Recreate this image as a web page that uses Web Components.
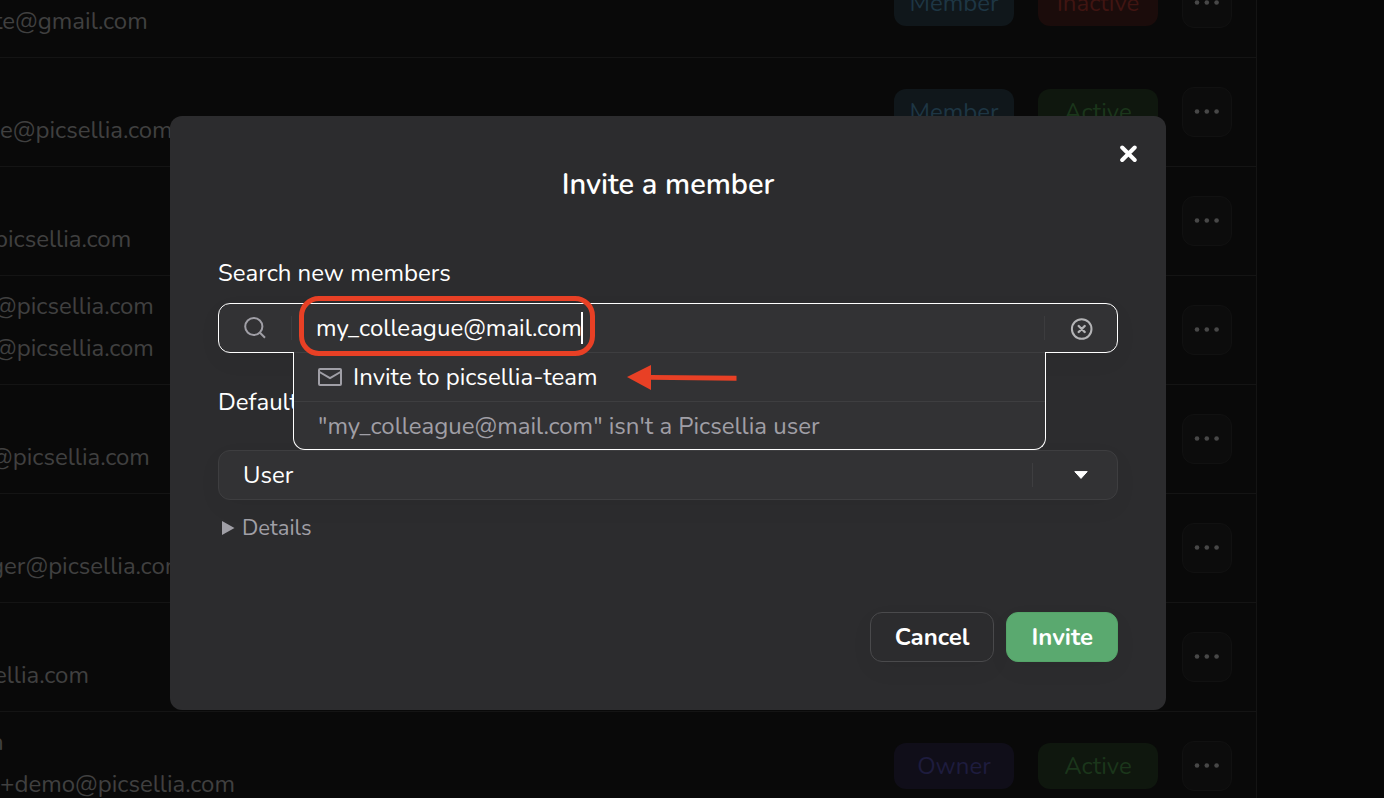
<!DOCTYPE html>
<html lang="en">
<head>
<meta charset="utf-8">
<meta name="viewport" content="width=device-width, initial-scale=1">
<title>Organization members</title>
<style>
    body {
        margin: 0;
        background: #070707;
        color: #fff;
        font-family: Nunito, Lato, sans-serif;
        font-size: 24px;
        overflow: hidden;
    }
</style>
</head>
<body>
<members-page>
    <members-table></members-table>
    <modal-dialog slot="modal" heading="Invite a member">
        <form-field label="Search new members">
            <member-search value="my_colleague@mail.com" team="picsellia-team"></member-search>
        </form-field>
        <form-field class="role" label="Default">
            <role-select></role-select>
        </form-field>
        <details-toggle>Details</details-toggle>
        <action-button slot="actions">Cancel</action-button>
        <action-button slot="actions" primary>Invite</action-button>
    </modal-dialog>
</members-page>

<script>
class MembersPage extends HTMLElement {
    constructor() {
        super();
        this.attachShadow({ mode: 'open' });
        this.shadowRoot.innerHTML = `
            <style>
                :host {
                    display: block;
                    height: 100vh;
                    overflow: hidden;
                    position: relative;
                }
                .overlay {
                    position: absolute;
                    inset: 0;
                    display: grid;
                    align-content: center;
                    justify-items: center;
                    padding: 28px 48px 0 0;
                }
            </style>
            <slot></slot>
            <div class="overlay"><slot name="modal"></slot></div>
        `;
    }
}

// cut: how far the first letter runs past the left edge of the view
const members = [
    { lines: ['te@gmail.com'], cut: 'half' },
    { lines: ['e@picsellia.com'] },
    { lines: ['picsellia.com'], cut: 'half' },
    { lines: ['@picsellia.com', '@picsellia.com'], cut: 'half' },
    { lines: ['@picsellia.com'], cut: 'most' },
    { lines: ['ger@picsellia.com'], cut: 'most' },
    { lines: ['ellia.com'], cut: 'half' },
    { lines: ['n', '+demo@picsellia.com'], cut: 'first' }
];
const states = {
    0: ['Member', 'Inactive'],
    1: ['Member', 'Active'],
    7: ['Owner', 'Active']
};

class MembersTable extends HTMLElement {
    constructor() {
        super();
        this.attachShadow({ mode: 'open' });
        this.shadowRoot.innerHTML = `
            <style>
                :host {
                    display: block;
                    margin: -51px 127px 0 0;
                    background: #090909;
                    border-right: 1px solid #141414;
                    color: #404040;
                }
                table {
                    width: 100%;
                    border-collapse: separate;
                    border-spacing: 0;
                    table-layout: fixed;
                }
                td {
                    box-sizing: border-box;
                    height: 109px;
                    padding: 0;
                    border-bottom: 1px solid #141414;
                    vertical-align: middle;
                }
                .email {
                    padding-bottom: 15px;
                    vertical-align: bottom;
                }
                .email div {
                    line-height: 42px;
                    white-space: nowrap;
                }
                .half div { margin-left: -6px; }
                .most div, .first div:first-child { margin-left: -10px; }
                .pill-col { width: 144px; }
                .menu-col { width: 74px; }
            </style>
            <table>
                <colgroup>
                    <col><col class="pill-col"><col class="pill-col"><col class="menu-col">
                </colgroup>
                <tbody></tbody>
            </table>
        `;
    }

    connectedCallback() {
        const pill = kind => kind ? `<status-pill kind="${kind}">${kind}</status-pill>` : '';
        this.shadowRoot.querySelector('tbody').innerHTML = members.map(({ lines, cut = '' }, index) => {
            const [role, status] = states[index] || [];
            return `
                <tr>
                    <td class="email ${cut}">${lines.map(line => `<div>${line}</div>`).join('')}</td>
                    <td>${pill(role)}</td>
                    <td>${pill(status)}</td>
                    <td><menu-button></menu-button></td>
                </tr>
            `;
        }).join('');
    }
}

class StatusPill extends HTMLElement {
    constructor() {
        super();
        this.attachShadow({ mode: 'open' });
        this.shadowRoot.innerHTML = `
            <style>
                :host {
                    display: block;
                    width: 120px;
                    border-radius: 12px;
                    line-height: 46px;
                    text-align: center;
                }
                :host([kind="Member"]) { background: #10171b; color: #1e3644; }
                :host([kind="Owner"]) { background: #100e19; color: #1e1c3e; }
                :host([kind="Active"]) { background: #0f170e; color: #1b361b; }
                :host([kind="Inactive"]) { background: #1b0c0b; color: #401512; }
            </style>
            <slot></slot>
        `;
    }
}

class MenuButton extends HTMLElement {
    constructor() {
        super();
        this.attachShadow({ mode: 'open' });
        this.shadowRoot.innerHTML = `
            <style>
                :host { display: block; }
                button {
                    display: grid;
                    place-items: center;
                    width: 50px;
                    height: 50px;
                    padding: 0;
                    border: 1px solid #111;
                    border-radius: 12px;
                    background: #0c0c0c;
                    color: #484848;
                }
            </style>
            <button type="button" aria-label="Member actions">
                <svg width="26" height="6" viewBox="0 0 26 6" fill="currentColor">
                    <circle cx="3" cy="2.5" r="2.3"/><circle cx="12.8" cy="2.5" r="2.3"/><circle cx="22.6" cy="2.5" r="2.3"/>
                </svg>
            </button>
        `;
    }
}

class ModalDialog extends HTMLElement {
    constructor() {
        super();
        this.attachShadow({ mode: 'open' });
        this.shadowRoot.innerHTML = `
            <style>
                :host {
                    display: block;
                    box-sizing: border-box;
                    width: 100%;
                    max-width: 996px;
                    padding: 48px;
                    border-radius: 12px;
                    background: #2c2c2e;
                    position: relative;
                }
                h2 {
                    margin: 0 0 48px;
                    font-size: 29px;
                    font-weight: 600;
                    line-height: 42px;
                    text-align: center;
                }
                .close {
                    position: absolute;
                    top: 24px;
                    right: 24px;
                    display: grid;
                    place-items: center;
                    width: 28px;
                    height: 28px;
                    padding: 0;
                    border: 0;
                    background: none;
                    color: #fff;
                }
                footer {
                    display: flex;
                    justify-content: flex-end;
                    gap: 12px;
                    margin-top: 66px;
                }
            </style>
            <button class="close" type="button" aria-label="Close">
                <svg width="18" height="18" viewBox="0 0 18 18" fill="none" stroke="currentColor" stroke-width="4" stroke-linecap="round">
                    <path d="M3.2 2.5l12.5 12.5M15.7 2.5L3.2 15"/>
                </svg>
            </button>
            <h2></h2>
            <slot></slot>
            <footer><slot name="actions"></slot></footer>
        `;
    }

    connectedCallback() {
        this.setAttribute('role', 'dialog');
        this.shadowRoot.querySelector('h2').textContent = this.getAttribute('heading');
    }
}

class FormField extends HTMLElement {
    constructor() {
        super();
        this.attachShadow({ mode: 'open' });
        this.shadowRoot.innerHTML = `
            <style>
                :host { display: block; }
                :host(.role) { margin-top: 30px; }
                label {
                    display: block;
                    margin-bottom: 11px;
                    line-height: 38px;
                }
                :host(.role) label { margin-bottom: 29px; }
            </style>
            <label></label>
            <slot></slot>
        `;
    }

    connectedCallback() {
        const label = this.shadowRoot.querySelector('label');
        label.textContent = this.getAttribute('label');
        label.addEventListener('click', () => this.firstElementChild.focus());
    }
}

class MemberSearch extends HTMLElement {
    constructor() {
        super();
        this.attachShadow({ mode: 'open', delegatesFocus: true });
        this.shadowRoot.innerHTML = `
            <style>
                :host {
                    display: block;
                    position: relative;
                    z-index: 1;
                }
                .box {
                    display: flex;
                    align-items: center;
                    box-sizing: border-box;
                    height: 50px;
                    border: 1px solid #fff;
                    border-radius: 12px;
                    background: #323234;
                    color: #a09fa6;
                    box-shadow: 0 8px 24px rgba(0, 0, 0, 0.04);
                }
                .icon {
                    display: grid;
                    place-items: center;
                    box-sizing: border-box;
                    width: 73px;
                    height: 24px;
                    padding: 0;
                    border: 0;
                    background: none;
                    color: inherit;
                }
                .search { border-right: 1px solid #3c3c3e; }
                .clear { border-left: 1px solid #3c3c3e; color: #b4b4b6; }
                .entry {
                    flex: 1;
                    min-width: 0;
                    padding-left: 24px;
                }
                .typed {
                    display: inline-flex;
                    align-items: center;
                    position: relative;
                }
                input {
                    field-sizing: content;
                    height: 48px;
                    padding: 0;
                    border: 0;
                    outline: 0;
                    background: none;
                    color: #fff;
                    font: inherit;
                }
                .caret {
                    width: 2px;
                    height: 32px;
                    margin-left: -1px;
                    background: #fff;
                }
                .highlight {
                    position: absolute;
                    inset: -8px -12px -4px -17px;
                    border: 5px solid #e84025;
                    border-radius: 20px;
                    pointer-events: none;
                    z-index: 2;
                }
                .results {
                    position: absolute;
                    top: 49px;
                    left: 75px;
                    right: 72px;
                    margin: 0;
                    padding: 0;
                    list-style: none;
                    border: 1px solid #fff;
                    border-top: 0;
                    border-radius: 0 0 12px 12px;
                    background: #323234;
                }
                li {
                    display: flex;
                    align-items: center;
                    height: 48px;
                    padding-left: 24px;
                    border-top: 1px solid #3e3e40;
                    color: #a09fa6;
                }
                li:last-child { height: 47px; }
                .invite {
                    display: flex;
                    align-items: center;
                    gap: 11px;
                    padding: 0;
                    border: 0;
                    background: none;
                    color: #a09fa6;
                    font: inherit;
                }
                .invite span { color: #fff; }
                .arrow { margin-left: 29px; }
            </style>
            <div class="box">
                <span class="icon search">
                    <svg width="24" height="24" viewBox="0 0 24 24" fill="none" stroke="currentColor" stroke-width="2">
                        <circle cx="10.8" cy="10.5" r="8.6"/><path d="M17 16.8l5 5"/>
                    </svg>
                </span>
                <div class="entry">
                    <div class="typed">
                        <input type="text" aria-label="Search new members">
                        <span class="caret"></span>
                        <div class="highlight"></div>
                    </div>
                </div>
                <button class="icon clear" type="button" aria-label="Clear search">
                    <svg width="24" height="24" viewBox="0 0 24 24" fill="none" stroke="currentColor" stroke-width="2" stroke-linecap="round">
                        <circle cx="12.7" cy="13" r="9.8"/><path d="M9.7 10l6 6M15.7 10l-6 6" stroke-width="2.4"/>
                    </svg>
                </button>
            </div>
            <ul class="results">
                <li>
                    <button class="invite" type="button">
                        <svg width="24" height="18" viewBox="0 0 24 18" fill="none" stroke="currentColor" stroke-width="2" stroke-linejoin="round">
                            <rect x="1" y="1" width="22" height="16" rx="1"/><path d="M1.5 4L12 10.2 22.5 4"/>
                        </svg>
                        <span class="team"></span>
                    </button>
                    <svg class="arrow" width="110" height="26" viewBox="0 0 110 26" fill="#e84025">
                        <path d="M0 13L24 1v10l85.5.8v5L24 15.8V26z"/>
                    </svg>
                </li>
                <li class="note"></li>
            </ul>
        `;
    }

    connectedCallback() {
        const value = this.getAttribute('value');
        const input = this.shadowRoot.querySelector('input');
        input.value = value;
        this.shadowRoot.querySelector('.team').textContent = `Invite to ${this.getAttribute('team')}`;
        this.shadowRoot.querySelector('.note').textContent = `"${value}" isn't a Picsellia user`;
        this.shadowRoot.querySelector('.clear').addEventListener('click', () => {
            input.value = '';
            input.focus();
        });
    }
}

class RoleSelect extends HTMLElement {
    constructor() {
        super();
        this.attachShadow({ mode: 'open', delegatesFocus: true });
        this.shadowRoot.innerHTML = `
            <style>
                :host {
                    display: grid;
                    align-items: center;
                }
                select, .arrow { grid-area: 1 / 1; }
                select {
                    appearance: none;
                    box-sizing: border-box;
                    width: 100%;
                    height: 50px;
                    padding: 0 96px 0 24px;
                    border: 1px solid #3e3e40;
                    border-radius: 12px;
                    background: #323234;
                    color: #fff;
                    font: inherit;
                    box-shadow: 0 8px 24px rgba(0, 0, 0, 0.04);
                }
                .arrow {
                    justify-self: end;
                    display: grid;
                    place-items: center;
                    box-sizing: border-box;
                    width: 86px;
                    height: 24px;
                    padding-left: 10px;
                    border-left: 1px solid #3e3e40;
                    pointer-events: none;
                }
            </style>
            <select aria-label="Default role">
                <option>User</option>
            </select>
            <span class="arrow">
                <svg width="14" height="8" viewBox="0 0 14 8" fill="#fff" stroke="#fff" stroke-linejoin="round">
                    <path d="M.8.6h12.4L7 7.4z"/>
                </svg>
            </span>
        `;
    }
}

class DetailsToggle extends HTMLElement {
    constructor() {
        super();
        this.attachShadow({ mode: 'open' });
        this.shadowRoot.innerHTML = `
            <style>
                :host {
                    display: block;
                    margin-top: 10px;
                    color: #a09fa6;
                    font-size: 22px;
                    line-height: 36px;
                }
                summary {
                    display: flex;
                    align-items: center;
                    gap: 7px;
                    padding-left: 4px;
                    list-style: none;
                }
            </style>
            <details>
                <summary>
                    <svg width="13" height="14" viewBox="0 0 13 14" fill="currentColor"><path d="M0 0l12.5 7L0 14z"/></svg>
                    <slot></slot>
                </summary>
            </details>
        `;
    }
}

class ActionButton extends HTMLElement {
    constructor() {
        super();
        this.attachShadow({ mode: 'open' });
        this.shadowRoot.innerHTML = `
            <style>
                :host { display: block; }
                button {
                    box-sizing: border-box;
                    height: 50px;
                    padding: 0 24px;
                    border: 1px solid #4a4a4c;
                    border-radius: 12px;
                    background: #2c2c2e;
                    color: #fff;
                    font: inherit;
                    font-weight: 700;
                    box-shadow: 0 8px 24px rgba(0, 0, 0, 0.04);
                }
                :host([primary]) button {
                    border-color: #54a468;
                    background: #5aa96f;
                }
            </style>
            <button type="button"><slot></slot></button>
        `;
    }
}

customElements.define('status-pill', StatusPill);
customElements.define('menu-button', MenuButton);
customElements.define('members-table', MembersTable);
customElements.define('members-page', MembersPage);
customElements.define('action-button', ActionButton);
customElements.define('details-toggle', DetailsToggle);
customElements.define('role-select', RoleSelect);
customElements.define('member-search', MemberSearch);
customElements.define('form-field', FormField);
customElements.define('modal-dialog', ModalDialog);
</script>
</body>
</html>
